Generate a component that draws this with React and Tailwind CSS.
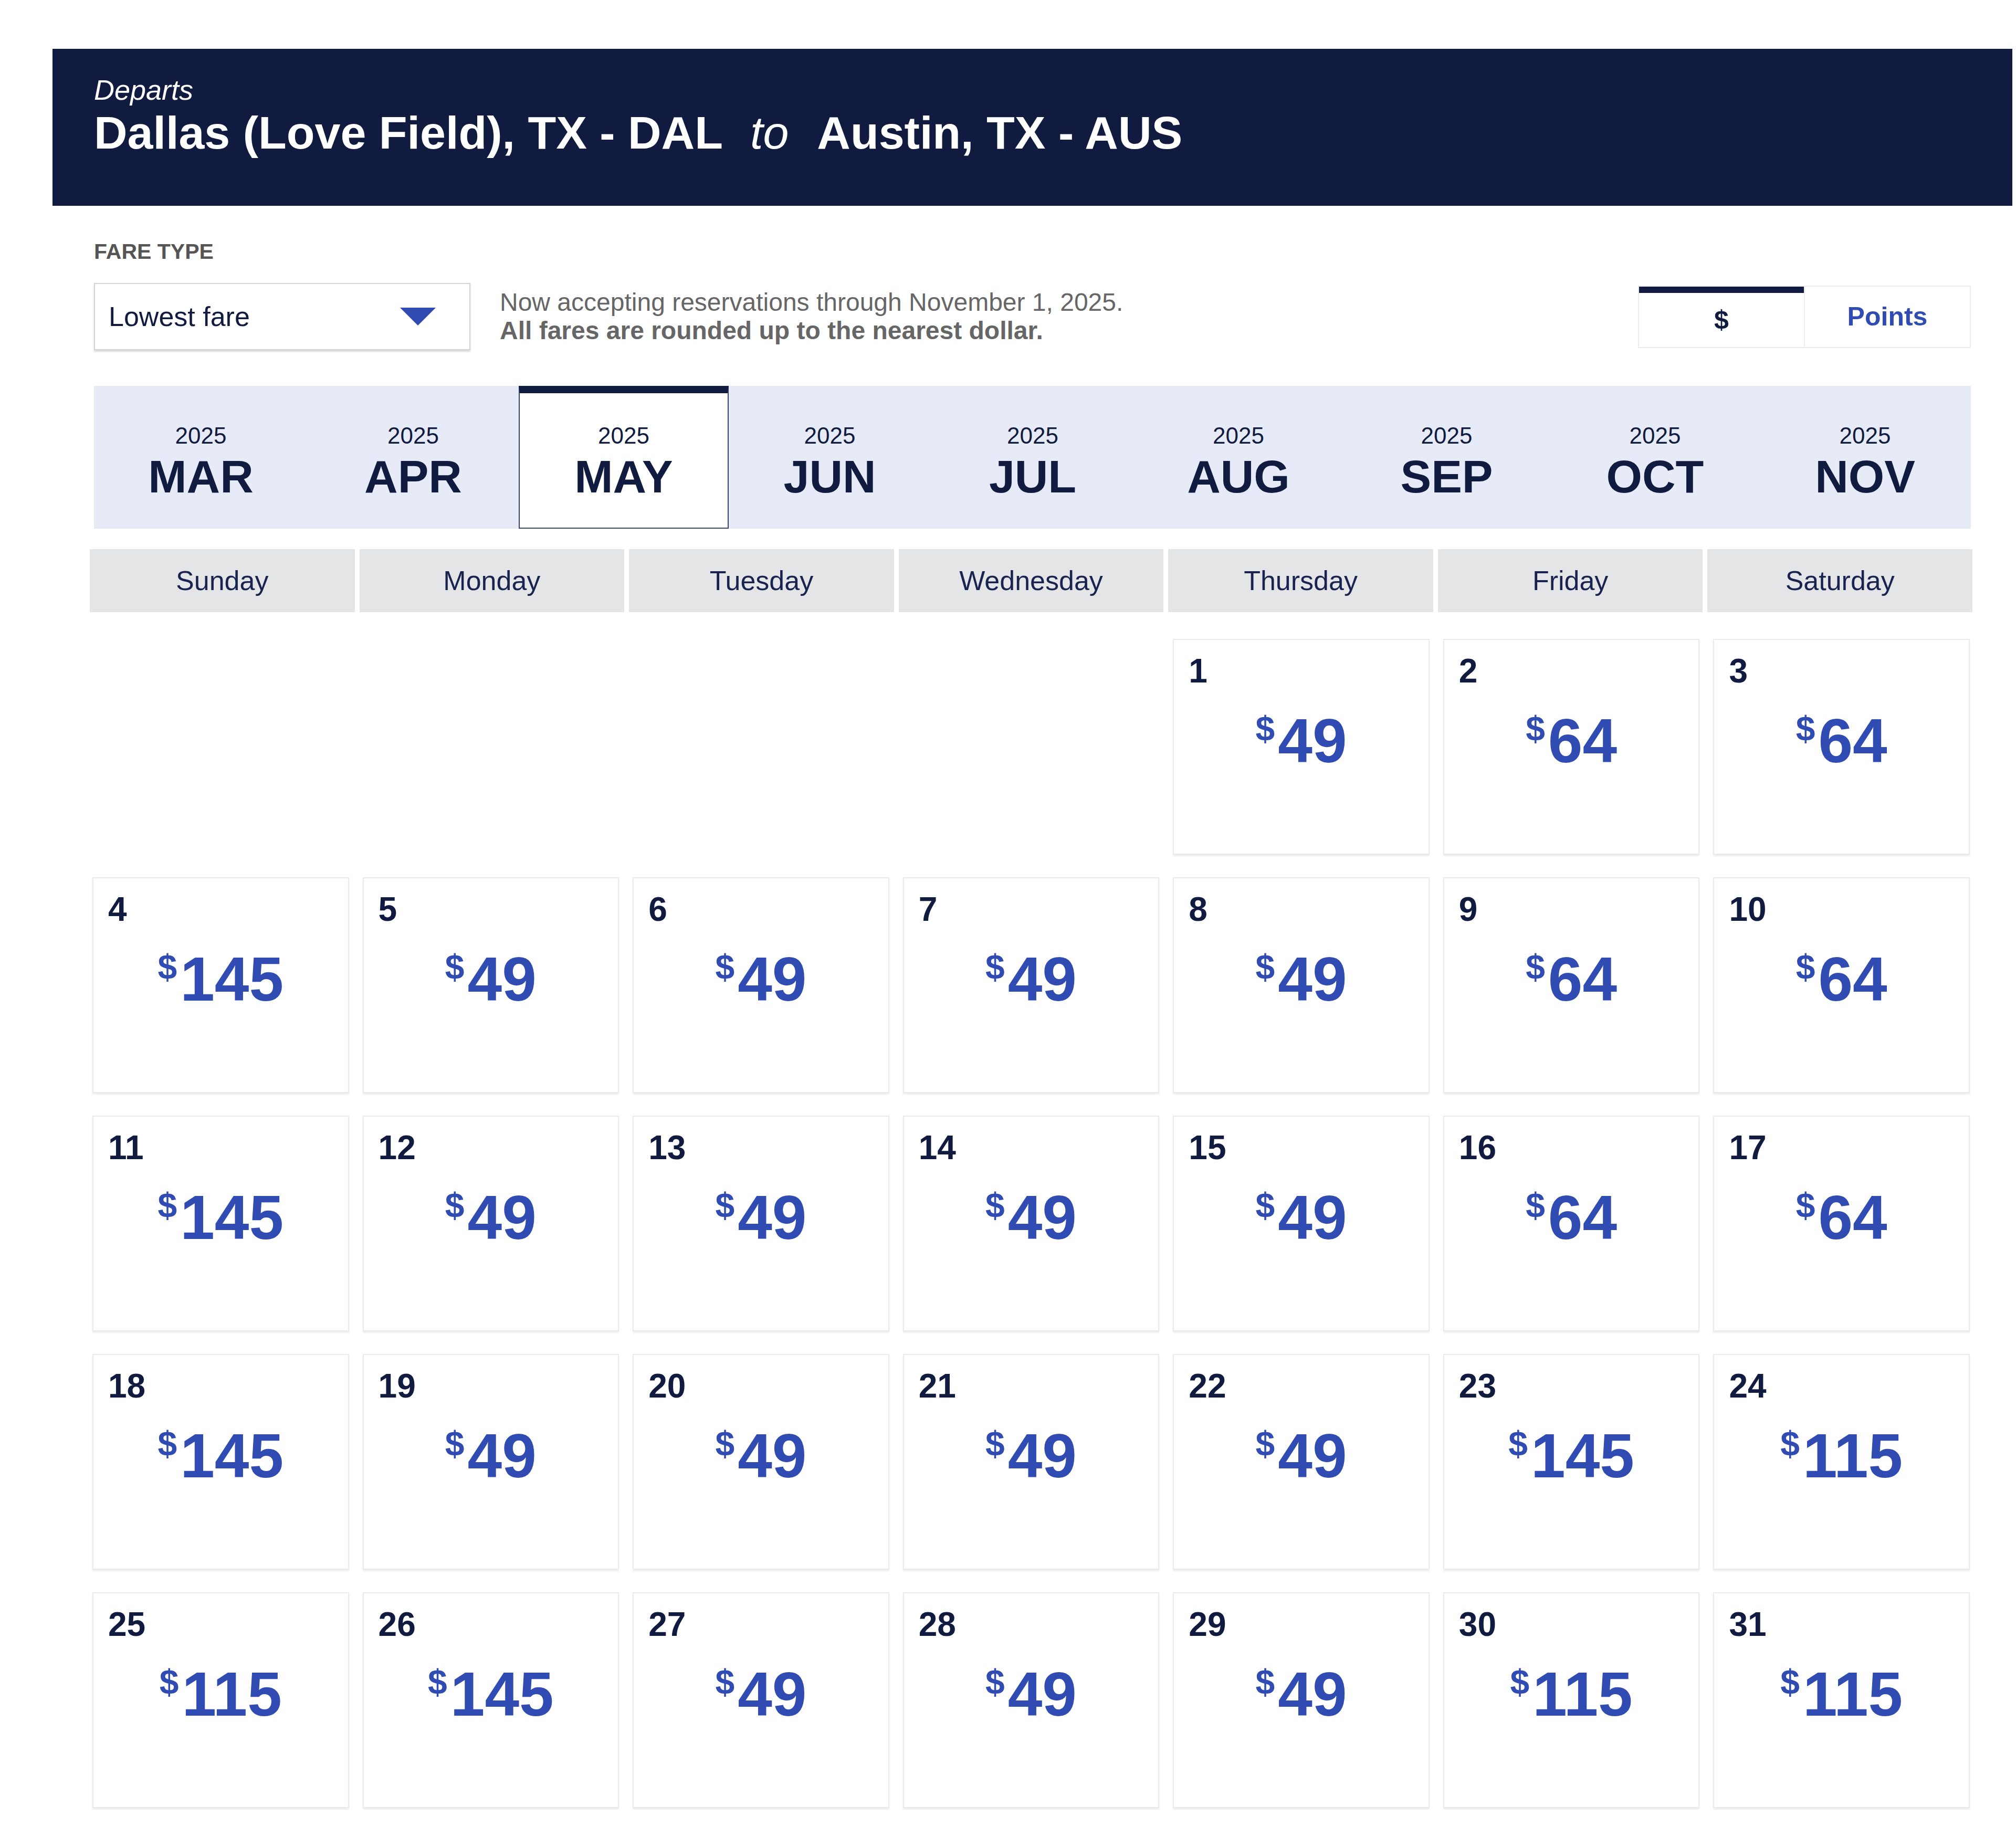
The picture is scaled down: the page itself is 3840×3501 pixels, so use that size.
import React from 'react';

const months = ['MAR', 'APR', 'MAY', 'JUN', 'JUL', 'AUG', 'SEP', 'OCT', 'NOV'];
const weekdays = ['Sunday', 'Monday', 'Tuesday', 'Wednesday', 'Thursday', 'Friday', 'Saturday'];

// May 2025 starts on a Thursday, so four blank slots lead the grid
const fares = [
  49, 64, 64,
  145, 49, 49, 49, 49, 64, 64,
  145, 49, 49, 49, 49, 64, 64,
  145, 49, 49, 49, 49, 145, 115,
  115, 145, 49, 49, 49, 115, 115,
];

const DayCell = ({ day, fare }) => (
  <div className="flex h-[411px] flex-col border-2 border-[#ebebeb] bg-white px-[28px] pt-[27px] shadow-[0_3px_3px_rgba(0,0,0,0.07)]">
    <span className="text-[64px] font-bold leading-none text-[#111b40]">{day}</span>
    <div className="mt-[42px] flex items-start justify-center font-bold text-[#304cb2]">
      <span className="mr-[6px] mt-[3px] text-[66px] leading-none">$</span>
      <span className="text-[118px] leading-none">{fare}</span>
    </div>
  </div>
);

export default function App() {
  const slots = [null, null, null, null, ...fares.map((f, i) => ({ day: i + 1, fare: f }))];

  return (
    <div className="min-h-[3501px] bg-white pl-[100px] pr-[7px] pt-[93px] font-['Liberation_Sans',Arial,sans-serif]">
      {/* Route banner */}
      <header className="h-[299px] bg-[#111b40] pl-[79px] pt-[47px] text-white">
        <p className="text-[54px] italic leading-[62px]">Departs</p>
        <h1 className="flex items-baseline text-[88px] font-bold leading-[101px]">
          <span>Dallas (Love Field), TX - DAL</span>
          <span className="ml-[52px] mr-[54px] font-normal italic">to</span>
          <span>Austin, TX - AUS</span>
        </h1>
      </header>

      <div className="px-[79px]">
        <p className="mt-[63px] text-[41px] font-bold leading-[49px] text-[#555555]">FARE TYPE</p>

        <div className="mt-[35px] flex items-center">
          <div className="flex h-[128px] w-[717px] items-center justify-between border-2 border-[#d4d4d4] pl-[26px] pr-[64px] shadow-[0_3px_3px_rgba(0,0,0,0.15)]">
            <span className="text-[52px] text-[#111b40]">Lowest fare</span>
            <svg width="68" height="34" viewBox="0 0 68 34">
              <polygon points="0,0 68,0 34,34" fill="#304cb2" />
            </svg>
          </div>

          <div className="ml-[56px] text-[48px] leading-[54px] text-[#666666]">
            <p>Now accepting reservations through November 1, 2025.</p>
            <p className="font-bold">All fares are rounded up to the nearest dollar.</p>
          </div>

          <div className="ml-auto flex h-[119px] w-[634px] border-2 border-[#ececec]">
            <div className="flex flex-1 items-center justify-center border-t-[12px] border-t-[#111b40] text-[50px] font-bold text-[#111b40]">
              $
            </div>
            <div className="flex flex-1 items-center justify-center border-l-2 border-l-[#ececec] text-[50px] font-bold text-[#304cb2]">
              Points
            </div>
          </div>
        </div>

        {/* Month picker */}
        <div className="mt-[68px] grid h-[272px] grid-cols-[407px_402px_400px_385px_388px_396px_397px_397px_1fr] bg-[#e7ebf7] text-[#111b40]">
          {months.map((m) => (
            <div
              key={m}
              className={
                m === 'MAY'
                  ? 'flex flex-col items-center justify-center border-2 border-[#3a4670] border-t-[14px] border-t-[#111b40] bg-white'
                  : 'flex flex-col items-center justify-center border-2 border-transparent border-t-[14px]'
              }
            >
              <span className="text-[44px] leading-[53px]">2025</span>
              <span className="mt-[8px] text-[88px] font-bold leading-none">{m}</span>
            </div>
          ))}
        </div>

        {/* Calendar */}
        <div className="-ml-[8px] -mr-[3px] mt-[39px]">
          <div className="grid grid-cols-7 gap-[9px]">
            {weekdays.map((d) => (
              <div key={d} className="flex h-[120px] items-center justify-center bg-[#e4e5e7] text-[52px] text-[#1a2350]">
                {d}
              </div>
            ))}
          </div>

          <div className="mt-[51px] grid grid-cols-7 gap-x-[26px] gap-y-[43px] px-[5px] pb-[56px]">
            {slots.map((s, i) => (s ? <DayCell key={i} day={s.day} fare={s.fare} /> : <div key={i} />))}
          </div>
        </div>
      </div>
    </div>
  );
}
